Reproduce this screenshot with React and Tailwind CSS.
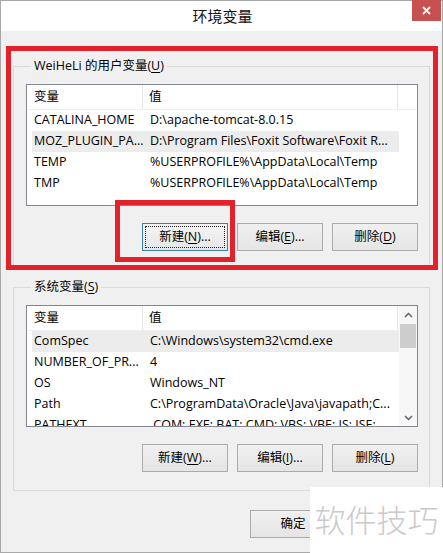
import React from "react";

const FONT = "[font-family:'Open_Sans','Noto_Sans_CJK_SC',sans-serif]";

function Btn({ children, focus }) {
  return (
    <div
      className={
        focus
          ? "relative w-[86px] h-[28px] flex items-center justify-center text-[12.5px] text-black border border-[#3c7fb1] bg-linear-to-b from-[#f4f4f4] to-[#e6e6e6]"
          : "relative w-[86px] h-[28px] flex items-center justify-center text-[12.5px] text-black border border-[#acacac] bg-linear-to-b from-[#f0f0f0] to-[#e5e5e5]"
      }
    >
      {focus && (
        <div className="absolute inset-[2px] border border-dotted border-[#222]" />
      )}
      <span className="leading-none">{children}</span>
    </div>
  );
}

function U({ children }) {
  return <span className="underline underline-offset-[2px]">{children}</span>;
}

function Header({ rest }) {
  return (
    <div className="h-[25px] flex items-center border-b border-[#f0f0f0] shrink-0 text-[12.5px] text-black">
      <div className="w-[116px] h-full flex items-center pl-[7px] border-r border-[#e5e5e5]">变量</div>
      <div className="w-[255px] h-full flex items-center pl-[6px] border-r border-[#e5e5e5]">值</div>
      {rest && <div className="flex-1" />}
    </div>
  );
}

function Row({ name, value, sel }) {
  return (
    <div
      className={
        sel
          ? "h-[21px] w-[367px] flex items-center bg-[#ececec] whitespace-nowrap shrink-0"
          : "h-[21px] w-[367px] flex items-center whitespace-nowrap shrink-0"
      }
    >
      <div className="w-[111px] pl-[2px] overflow-hidden">{name}</div>
      <div className="flex-1 pl-[7px] overflow-hidden">{value}</div>
    </div>
  );
}

function Chevron({ up }) {
  return (
    <svg width="9" height="6" viewBox="0 0 9 6">
      <path
        d={up ? "M1 5 L4.5 1.5 L8 5" : "M1 1 L4.5 4.5 L8 1"}
        fill="none"
        stroke="#5a5a5a"
        strokeWidth="1.4"
      />
    </svg>
  );
}

export default function App() {
  return (
    <div className={`relative w-[443px] h-[553px] ${FONT}`}>
      <div className="w-[443px] h-[553px] bg-[#f0f0f0] border border-[#a8a8a8] flex flex-col overflow-hidden">
        {/* title bar */}
        <div className="h-[30px] bg-white flex items-center justify-center shrink-0">
          <span className="text-[15px] text-[#111] pl-[2px]">环境变量</span>
        </div>

        <div className="flex flex-col px-[12px]">
          {/* user vars */}
          <fieldset className="mt-[27px] border border-[#dadada] pt-[10px] pl-[12px] pr-[11px] pb-[18px]">
            <legend className="ml-[5px] px-[3px] text-[12.5px] leading-[16px] text-black">
              WeiHeLi 的用户变量(<U>U</U>)
            </legend>
            <div className="h-[122px] border border-[#828790] bg-white flex flex-col overflow-hidden text-[12.5px] text-black">
              <Header rest />
              <div className="pl-[5px] flex flex-col">
                <Row name="CATALINA_HOME" value="D:\apache-tomcat-8.0.15" />
                <Row name="MOZ_PLUGIN_PA..." value="D:\Program Files\Foxit Software\Foxit R..." sel />
                <Row name="TEMP" value="%USERPROFILE%\AppData\Local\Temp" />
                <Row name="TMP" value="%USERPROFILE%\AppData\Local\Temp" />
              </div>
            </div>
            <div className="mt-[17px] flex justify-end gap-[9px]">
              <Btn focus>
                新建(<U>N</U>)...
              </Btn>
              <Btn>
                编辑(<U>E</U>)...
              </Btn>
              <Btn>
                删除(<U>D</U>)
              </Btn>
            </div>
          </fieldset>

          {/* system vars */}
          <fieldset className="mt-[9px] border border-[#dadada] pt-[10px] pl-[12px] pr-[11px] pb-[18px]">
            <legend className="ml-[5px] px-[3px] text-[12.5px] leading-[16px] text-black">
              系统变量(<U>S</U>)
            </legend>
            <div className="h-[122px] border border-[#828790] bg-white flex overflow-hidden text-[12.5px] text-black">
              <div className="w-[372px] flex flex-col overflow-hidden">
                <Header />
                <div className="pl-[5px] flex flex-col">
                  <Row name="ComSpec" value="C:\Windows\system32\cmd.exe" sel />
                  <Row name="NUMBER_OF_PR..." value="4" />
                  <Row name="OS" value="Windows_NT" />
                  <Row name="Path" value="C:\ProgramData\Oracle\Java\javapath;C..." />
                  <Row name="PATHEXT" value=".COM;.EXE;.BAT;.CMD;.VBS;.VBE;.JS;.JSE;..." />
                </div>
              </div>
              <div className="w-[18px] flex flex-col bg-[#f7f7f7]">
                <div className="h-[17px] flex items-center justify-center">
                  <Chevron up />
                </div>
                <div className="mx-[1px] mt-[1px] h-[24px] bg-[#cdcdcd]" />
                <div className="flex-1" />
                <div className="h-[17px] flex items-center justify-center">
                  <Chevron />
                </div>
              </div>
            </div>
            <div className="mt-[17px] flex justify-end gap-[9px]">
              <Btn>
                新建(<U>W</U>)...
              </Btn>
              <Btn>
                编辑(<U>I</U>)...
              </Btn>
              <Btn>
                删除(<U>L</U>)
              </Btn>
            </div>
          </fieldset>

          <div className="mt-[19px] flex justify-end gap-[8px]">
            <Btn>确定</Btn>
            <Btn>{""}</Btn>
          </div>
        </div>
      </div>

      {/* close button */}
      <div className="absolute top-0 left-[412px] w-[29px] h-[21px] bg-[#c75050] flex items-center justify-center">
        <svg width="9" height="9" viewBox="0 0 9 9">
          <path d="M1 1 L8 8 M8 1 L1 8" stroke="white" strokeWidth="1.8" />
        </svg>
      </div>

      {/* red annotation boxes */}
      <div className="absolute left-[6px] top-[46px] w-[432px] h-[224px] border-[5px] border-[#e1222b]" />
      <div className="absolute left-[115px] top-[200px] w-[120px] h-[62px] border-[5px] border-[#e1222b]" />

      {/* watermark */}
      <div className="absolute left-[310px] top-[487px] w-[133px] h-[66px] bg-white flex items-center justify-center">
        <span className="text-[31px] font-light text-[#cacaca] leading-none">软件技巧</span>
      </div>
    </div>
  );
}
